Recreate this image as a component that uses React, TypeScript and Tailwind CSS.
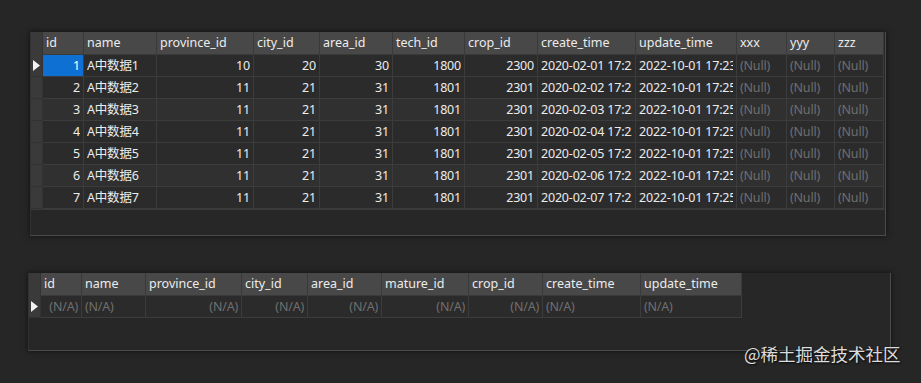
import React from "react";

type Col = { name: string; w: number; align: "l" | "r" };

const topCols: Col[] = [
  { name: "id", w: 41, align: "r" },
  { name: "name", w: 73, align: "l" },
  { name: "province_id", w: 97, align: "r" },
  { name: "city_id", w: 66, align: "r" },
  { name: "area_id", w: 73, align: "r" },
  { name: "tech_id", w: 72, align: "r" },
  { name: "crop_id", w: 73, align: "r" },
  { name: "create_time", w: 98, align: "l" },
  { name: "update_time", w: 101, align: "l" },
  { name: "xxx", w: 50, align: "l" },
  { name: "yyy", w: 48, align: "l" },
  { name: "zzz", w: 49, align: "l" },
];

const topRows: string[][] = [1, 2, 3, 4, 5, 6, 7].map((i) => [
  String(i),
  `A中数据${i}`,
  i === 1 ? "10" : "11",
  i === 1 ? "20" : "21",
  i === 1 ? "30" : "31",
  i === 1 ? "1800" : "1801",
  i === 1 ? "2300" : "2301",
  `2020-02-0${i} 17:22:10`,
  i === 1 ? "2022-10-01 17:23:11" : "2022-10-01 17:25:11",
  "(Null)",
  "(Null)",
  "(Null)",
]);

const botCols: Col[] = [
  { name: "id", w: 41, align: "r" },
  { name: "name", w: 64, align: "l" },
  { name: "province_id", w: 96, align: "r" },
  { name: "city_id", w: 66, align: "r" },
  { name: "area_id", w: 74, align: "r" },
  { name: "mature_id", w: 87, align: "r" },
  { name: "crop_id", w: 74, align: "r" },
  { name: "create_time", w: 98, align: "l" },
  { name: "update_time", w: 101, align: "l" },
];

const font = { fontFamily: "'Noto Sans', 'Noto Sans CJK SC', sans-serif" };

function Triangle() {
  return (
    <svg width="7" height="11" viewBox="0 0 7 11" className="block">
      <polygon points="0,0 7,5.5 0,11" fill="#f2f2f2" />
    </svg>
  );
}

function HeaderRow({ cols }: { cols: Col[] }) {
  return (
    <div className="flex h-[23px]">
      <div className="w-[12px] shrink-0 bg-[#3a3a3a] border-r border-[#333]" />
      {cols.map((c) => (
        <div
          key={c.name}
          style={{ width: c.w }}
          className="shrink-0 bg-[#484848] border-r border-b border-[#3a3a3a] pl-[3px] text-[12.5px] leading-[22px] text-[#ececec] whitespace-nowrap overflow-hidden"
        >
          {c.name}
        </div>
      ))}
    </div>
  );
}

function DataRow({
  cols,
  vals,
  first,
  idx,
}: {
  cols: Col[];
  vals: string[];
  first: boolean;
  idx: number;
}) {
  const rowBg = idx % 3 === 2 ? "bg-[#303030]" : "bg-[#2b2b2b]";
  return (
    <div className="flex h-[22px]">
      <div className="w-[12px] shrink-0 bg-[#3a3a3a] border-r border-b border-[#333] flex items-center justify-center">
        {first ? <Triangle /> : null}
      </div>
      {cols.map((c, j) => {
        const v = vals[j];
        const dim = v === "(Null)" || v === "(N/A)";
        const selected = first && j === 0 && v !== "(N/A)";
        return (
          <div
            key={c.name}
            style={{ width: c.w }}
            className={`shrink-0 border-r border-b border-[#3c3c3c] px-[3px] text-[12.5px] leading-[21px] whitespace-nowrap overflow-hidden ${
              c.align === "r" ? "text-right" : "text-left"
            } ${selected ? "bg-[#0f70d4] text-white" : rowBg} ${
              dim ? "text-[#6f6f6f]" : selected ? "" : "text-[#ececec]"
            }`}
          >
            <span className="block w-full overflow-hidden whitespace-nowrap tracking-[-0.2px]">
              {v}
            </span>
          </div>
        );
      })}
    </div>
  );
}

export default function App() {
  return (
    <div
      className="relative w-[921px] h-[383px] bg-[#262626] overflow-hidden"
      style={font}
    >
      <div className="pt-[32px] pl-[30px]">
        <div className="w-[856px] h-[204px] bg-[#272727] border border-t-0 border-l-[#323232] border-r-[#4a4a4a] border-b-[#4a4a4a] shadow-[0_0_6px_rgba(0,0,0,0.6)] flex flex-col">
          <HeaderRow cols={topCols} />
          {topRows.map((r, i) => (
            <DataRow key={i} cols={topCols} vals={r} first={i === 0} idx={i} />
          ))}
          <div className="flex-1 border-t border-[#3a3a3a]" />
        </div>
      </div>
      <div className="pt-[37px] pl-[28px]">
        <div className="w-[863px] h-[78px] bg-[#272727] border border-t-0 border-l-[#323232] border-r-[#4a4a4a] border-b-[#4a4a4a] shadow-[0_0_6px_rgba(0,0,0,0.6)] flex flex-col">
          <HeaderRow cols={botCols} />
          <DataRow
            cols={botCols}
            vals={botCols.map(() => "(N/A)")}
            first={true}
            idx={0}
          />
        </div>
      </div>
      <div
        className="absolute left-[744px] top-[343px] text-[17.5px] leading-[22px] text-[#dcdcdc] whitespace-nowrap"
        style={{
          textShadow: "1px 1px 2px rgba(0,0,0,0.9)",
          fontFamily: "'Noto Sans CJK SC', 'Noto Sans', sans-serif",
        }}
      >
        @稀土掘金技术社区
      </div>
    </div>
  );
}
